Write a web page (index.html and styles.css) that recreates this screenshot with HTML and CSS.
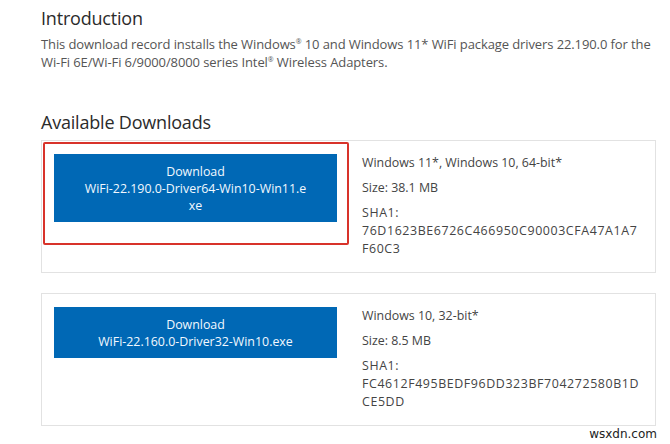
FILE: index.html
```html
<!DOCTYPE html>
<html lang="en">
<head>
<meta charset="utf-8">
<title>Intel WiFi Driver Downloads</title>
<link rel="stylesheet" href="styles.css">
</head>
<body>
<main class="page">
  <h2 class="section-title">Introduction</h2>
  <p class="intro">This download record installs the Windows<sup>®</sup> 10 and Windows 11* WiFi package drivers 22.190.0 for the Wi-Fi 6E/Wi-Fi 6/9000/8000 series Intel<sup>®</sup> Wireless Adapters.</p>

  <h2 class="section-title downloads-title">Available Downloads</h2>

  <div class="cards">
    <div class="card highlighted">
      <div class="card-action">
        <a class="btn" href="#">Download<br>WiFi-22.190.0-Driver64-Win10-Win11.exe</a>
      </div>
      <div class="card-info">
        <p>Windows 11*, Windows 10, 64-bit*</p>
        <p>Size: 38.1 MB</p>
        <p class="hash">SHA1:<br>76D1623BE6726C466950C90003CFA47A1A7F60C3</p>
      </div>
      <span class="marker"></span>
    </div>

    <div class="card">
      <div class="card-action">
        <a class="btn" href="#">Download<br>WiFi-22.160.0-Driver32-Win10.exe</a>
      </div>
      <div class="card-info">
        <p>Windows 10, 32-bit*</p>
        <p>Size: 8.5 MB</p>
        <p class="hash">SHA1:<br>FC4612F495BEDF96DD323BF704272580B1DCE5DD</p>
      </div>
    </div>
  </div>
</main>
<div class="watermark">wsxdn.com</div>
</body>
</html>
```

FILE: styles.css
```css
html, body {
  margin: 0;
  padding: 0;
  background: #ffffff;
  overflow: hidden;
}

body {
  font-family: "Open Sans", "Liberation Sans", sans-serif;
  color: #262626;
  position: relative;
  height: 444px;
}

.page {
  padding: 6px 0 0 41px;
  width: 615px;
}

.section-title {
  margin: 0;
  font-size: 18px;
  line-height: 24px;
  font-weight: 400;
  color: #2b2b2b;
  letter-spacing: -0.2px;
}

.intro {
  margin: 5px 0 0 0;
  font-size: 13px;
  line-height: 18px;
  color: #555;
  letter-spacing: -0.1px;
}

.intro sup {
  font-size: 7px;
  line-height: 0;
  vertical-align: 5px;
}

.downloads-title {
  margin-top: 39px;
}

.cards {
  margin-top: 6px;
  display: flex;
  flex-direction: column;
  gap: 20px;
}

.card {
  position: relative;
  display: flex;
  align-items: flex-start;
  gap: 25px;
  border: 1px solid #e2e2e2;
  padding: 13px 12px 14px 12px;
  min-height: 104px;
}

.card-action {
  flex: 0 0 283px;
}

.btn {
  display: block;
  background: #0068b5;
  color: #f2f8ff;
  text-decoration: none;
  text-align: center;
  font-size: 12.4px;
  line-height: 17px;
  padding: 8.5px 30px;
  word-break: break-all;
}

.card-info {
  flex: 1;
  font-size: 12.4px;
  color: #444;
  max-width: 279px;
}

.card-info p {
  margin: 0 0 7px 0;
  line-height: 18px;
}

.card-info p.hash {
  margin-bottom: 0;
  word-break: break-all;
  letter-spacing: 0.6px;
}

.marker {
  position: absolute;
  left: 1px;
  top: 1px;
  width: 302px;
  height: 99px;
  border: 2px solid #d8332a;
  border-radius: 2px;
  pointer-events: none;
}

.watermark {
  position: absolute;
  right: 13px;
  bottom: 3px;
  font-family: "DejaVu Sans", sans-serif;
  font-size: 12px;
  color: #222;
}
```
